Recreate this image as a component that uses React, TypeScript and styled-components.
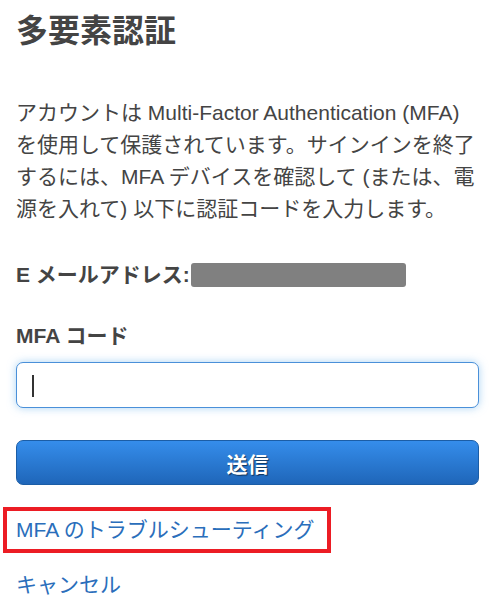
import React from "react";
import styled, { createGlobalStyle } from "styled-components";

const GlobalStyle = createGlobalStyle`
  html, body {
    margin: 0;
    padding: 0;
    background: #ffffff;
  }
  body {
    font-family: "Liberation Sans", Arial, "Noto Sans CJK JP", sans-serif;
    color: #444444;
  }
`;

const Page = styled.div`
  display: flex;
  flex-direction: column;
  padding: 0 14px 0 16px;
  width: 463px;
`;

const Title = styled.h1`
  margin: 11px 0 0;
  font-size: 32px;
  line-height: 40px;
  font-weight: 700;
  color: #444444;
  font-family: "Liberation Sans", "Noto Sans CJK JP", sans-serif;
`;

const Intro = styled.p`
  margin: 46px 0 0;
  font-size: 21px;
  line-height: 32px;
  color: #444444;
  font-family: "Liberation Sans", "Noto Sans CJK JP", sans-serif;
`;

const Label = styled.div<{ $top: number }>`
  margin-top: ${(p) => p.$top}px;
  display: flex;
  align-items: center;
  font-size: 21px;
  line-height: 32px;
  font-weight: 700;
  color: #444444;
  font-family: "Liberation Sans", "Noto Sans CJK JP", sans-serif;
`;

const Redacted = styled.span`
  display: inline-block;
  width: 215px;
  height: 24px;
  margin-left: 1px;
  background: #808080;
  border-radius: 3px;
  filter: blur(0.6px);
`;

const CodeInput = styled.input`
  box-sizing: border-box;
  margin-top: 10px;
  width: 463px;
  height: 46px;
  border: 1px solid #4a90d9;
  border-radius: 7px;
  box-shadow: 0 0 8px rgba(102, 175, 233, 0.55);
  outline: none;
  padding: 0 15px;
  font-size: 21px;
  color: #444444;
  font-family: "Liberation Sans", sans-serif;
`;

const Caret = styled.span`
  position: absolute;
  left: 16px;
  top: 23px;
  width: 2px;
  height: 22px;
  background: #333333;
`;

const InputWrap = styled.div`
  position: relative;
  width: 463px;
`;

const SubmitButton = styled.button`
  box-sizing: border-box;
  margin-top: 32px;
  width: 463px;
  height: 45px;
  border: 1px solid #1b5da6;
  border-radius: 7px;
  background: linear-gradient(#358deb, #1f66b9);
  color: #ffffff;
  font-size: 21px;
  font-weight: 700;
  text-shadow: 1px 1px 1px rgba(0, 0, 0, 0.55);
  font-family: "Liberation Sans", "Noto Sans CJK JP", sans-serif;
  cursor: pointer;
`;

const Highlight = styled.div`
  margin-top: 22px;
  margin-left: -13px;
  align-self: flex-start;
  border: 4px solid #ec1c24;
  padding: 3px 11px 3px 9px;
  width: 300px;
`;

const TextLink = styled.a<{ $top?: number }>`
  display: block;
  margin-top: ${(p) => p.$top ?? 0}px;
  font-size: 21px;
  line-height: 32px;
  color: #2a6ebb;
  text-decoration: none;
  font-family: "Liberation Sans", "Noto Sans CJK JP", sans-serif;
`;

export default function App() {
  return (
    <>
      <GlobalStyle />
      <Page>
        <Title>多要素認証</Title>
        <Intro>
          アカウントは Multi-Factor Authentication (MFA)
          を使用して保護されています。サインインを終了するには、MFA
          デバイスを確認して (または、電源を入れて) 以下に認証コードを入力します。
        </Intro>
        <Label $top={34}>
          E メールアドレス:<Redacted />
        </Label>
        <Label $top={29}>MFA コード</Label>
        <InputWrap>
          <CodeInput type="text" aria-label="MFA コード" />
          <Caret />
        </InputWrap>
        <SubmitButton type="button">送信</SubmitButton>
        <Highlight>
          <TextLink href="#">MFA のトラブルシューティング</TextLink>
        </Highlight>
        <TextLink href="#" $top={16}>
          キャンセル
        </TextLink>
      </Page>
    </>
  );
}
